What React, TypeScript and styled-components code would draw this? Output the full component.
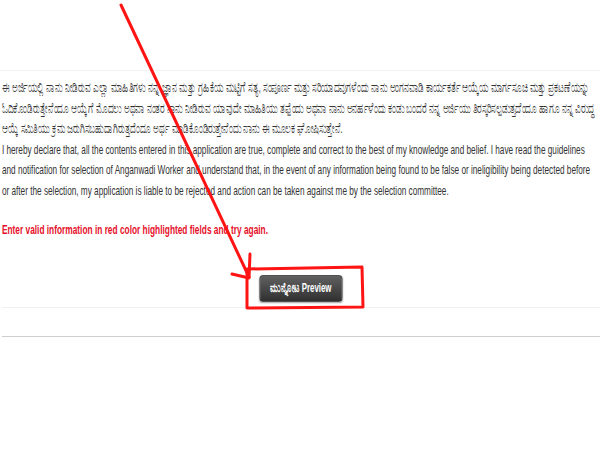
import styled, { createGlobalStyle } from 'styled-components'

/* ---------------- global ---------------- */

const Global = createGlobalStyle`
  html, body { margin: 0; padding: 0; background: #fff; }
  body { width: 600px; height: 450px; overflow: hidden; }
`

/* ---------------- UI ---------------- */

// the screenshot is squeezed horizontally, so the page is laid out at
// 950px and scaled down to the 600px window
const Viewport = styled.div`
  position: relative;
  width: 600px; height: 450px; overflow: hidden;
`
const Page = styled.div`
  width: 950px;
  transform: scaleX(0.6316);
  transform-origin: left top;
  padding-top: 70px;
  font-family: "Liberation Sans", "Noto Sans", sans-serif;
  color: #333;
`
const Section = styled.section`
  border-top: 1px solid #f1f1f1;
  padding: 7px 0 0 3px;
`
const Declaration = styled.p`
  margin: 0;
  font-size: 13px; line-height: 20.5px;
`
const Line = styled.span<{ $kn?: boolean }>`
  display: block; white-space: nowrap;
  font-size: ${({ $kn }) => ($kn ? '13.5px' : '13px')};
`
const ErrorMsg = styled.p`
  margin: 19px 0 0;
  font-size: 13.2px; line-height: 20px; font-weight: 700;
  color: #e5102a;
`
const ButtonRow = styled.div`
  display: flex; justify-content: center;
  margin-top: 35px;
  padding-bottom: 5px;
  border-bottom: 1px solid #f0f0f0;
`
const PreviewButton = styled.button`
  height: 27px; padding: 0 16px;
  border: 1px solid #2a2a2a; border-radius: 4px;
  background: linear-gradient(#606060, #303030);
  box-shadow: 0 1px 2px rgba(0,0,0,.35);
  color: #fff; font-family: inherit; font-size: 12.5px; font-weight: 700;
`
const Rule = styled.hr`
  margin: 28px 0 0; border: 0;
  border-top: 1px solid #cfcfcf;
`
const Annotation = styled.svg`
  position: absolute; left: 0; top: 0;
  width: 600px; height: 450px;
  pointer-events: none;
`

const kannada = [
  'ಈ ಅರ್ಜಿಯಲ್ಲಿ ನಾನು ನೀಡಿರುವ ಎಲ್ಲಾ ಮಾಹಿತಿಗಳು ನನ್ನ ಜ್ಞಾನ ಮತ್ತು ಗ್ರಹಿಕೆಯ ಮಟ್ಟಿಗೆ ಸತ್ಯ, ಸಂಪೂರ್ಣ ಮತ್ತು ಸರಿಯಾದವುಗಳೆಂದು ನಾನು ಅಂಗನವಾಡಿ ಕಾರ್ಯಕರ್ತೆ ಆಯ್ಕೆಯ ಮಾರ್ಗಸೂಚಿ ಮತ್ತು ಪ್ರಕಟಣೆಯನ್ನು',
  'ಓದಿಕೊಂಡಿರುತ್ತೇನೆಂದೂ ಆಯ್ಕೆಗೆ ಮೊದಲು ಅಥವಾ ನಂತರ ನಾನು ನೀಡಿರುವ ಯಾವುದೇ ಮಾಹಿತಿಯು ತಪ್ಪೆಂದು ಅಥವಾ ನಾನು ಅನರ್ಹಳೆಂದು ಕಂಡು ಬಂದರೆ ನನ್ನ ಅರ್ಜಿಯು ತಿರಸ್ಕರಿಸಲ್ಪಡುತ್ತದೆಂದೂ ಹಾಗೂ ನನ್ನ ವಿರುದ್ಧ',
  'ಆಯ್ಕೆ ಸಮಿತಿಯು ಕ್ರಮ ಜರುಗಿಸಬಹುದಾಗಿರುತ್ತದೆಂದೂ ಅರ್ಥ ಮಾಡಿಕೊಂಡಿರುತ್ತೇನೆಂದು ನಾನು ಈ ಮೂಲಕ ಘೋಷಿಸುತ್ತೇನೆ.',
]
const english = [
  'I hereby declare that, all the contents entered in this application are true, complete and correct to the best of my knowledge and belief. I have read the guidelines',
  'and notification for selection of Anganwadi Worker and understand that, in the event of any information being found to be false or ineligibility being detected before',
  'or after the selection, my application is liable to be rejected and action can be taken against me by the selection committee.',
]

/* ----------- page component ---------- */

export default function App() {
  return (
    <Viewport>
      <Global />
      <Page>
        <Section>
          <Declaration>
            {kannada.map((l, i) => <Line key={'k' + i} $kn>{l}</Line>)}
            {english.map((l, i) => <Line key={'e' + i}>{l}</Line>)}
          </Declaration>
          <ErrorMsg>Enter valid information in red color highlighted fields and try again.</ErrorMsg>
          <ButtonRow>
            <PreviewButton>ಮುನ್ನೋಟ Preview</PreviewButton>
          </ButtonRow>
          <Rule />
        </Section>
      </Page>

      {/* red hand-drawn arrow + box marking the button */}
      <Annotation viewBox="0 0 600 450">
        <g fill="none" stroke="#ff1414" strokeWidth="3" strokeLinecap="round" strokeLinejoin="round">
          <path d="M121 5 L249 277" />
          <path d="M250 254 L249 278 L232 274" />
          <path d="M247 269 L362 267 L363 307 L247 308 Z" />
        </g>
      </Annotation>
    </Viewport>
  )
}
